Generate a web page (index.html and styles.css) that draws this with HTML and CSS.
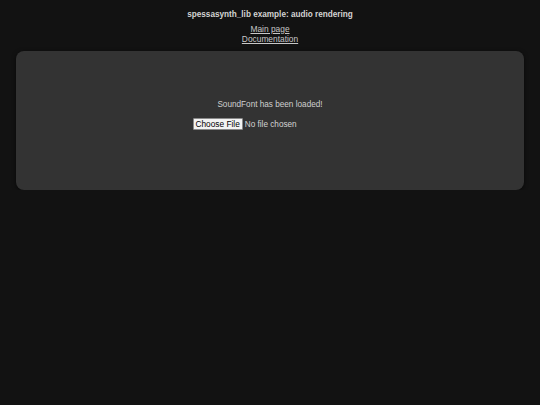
FILE: index.html
```
<!DOCTYPE html>
<html>
<head>
<meta charset="utf-8">
<title>spessasynth_lib example: audio rendering</title>
<link rel="stylesheet" href="styles.css">
</head>
<body>
<header class="top">
  <h1 class="title">spessasynth_lib example: audio rendering</h1>
  <nav class="links">
    <a href="#">Main page</a>
    <a href="#">Documentation</a>
  </nav>
</header>
<main class="panel">
  <p class="status">SoundFont has been loaded!</p>
  <input class="file" type="file">
</main>
</body>
</html>
```
FILE: styles.css
```
html, body {
  margin: 0;
  padding: 0;
  background: #121212;
}
body {
  font-family: "Liberation Sans", Arial, sans-serif;
  color: #cfcfcf;
  padding: 0 16px;
}
.top {
  text-align: center;
  padding-top: 10px;
}
.title {
  margin: 0;
  font-size: 8.2px;
  font-weight: bold;
  line-height: 10px;
  color: #d4d4d4;
}
.links {
  display: flex;
  flex-direction: column;
  align-items: center;
  margin-top: 4px;
  margin-bottom: 1px;
}
.links a {
  font-size: 8.4px;
  line-height: 10px;
  color: #c8c8c8;
}
.panel {
  box-sizing: border-box;
  margin-top: 7px;
  background: #333333;
  border-radius: 8px;
  height: 139px;
  padding-top: 49px;
  box-shadow: 0 1px 4px rgba(0,0,0,0.6);
  display: flex;
  flex-direction: column;
  align-items: center;
}
.status {
  margin: 0 0 8px 0;
  font-size: 8.2px;
  line-height: 10px;
  color: #cfcfcf;
}
.file {
  font-family: "Liberation Sans", Arial, sans-serif;
  font-size: 8.2px;
  color: #d4d4d4;
}
.file::file-selector-button {
  font-size: 8.3px;
  font-family: inherit;
  color: #000;
  background: #f3f3f3;
  border: 1px solid #8a8a8a;
  border-radius: 1px;
  padding: 1px 2px;
  margin-right: 2px;
  height: 12px;
  line-height: 8px;
}
```
